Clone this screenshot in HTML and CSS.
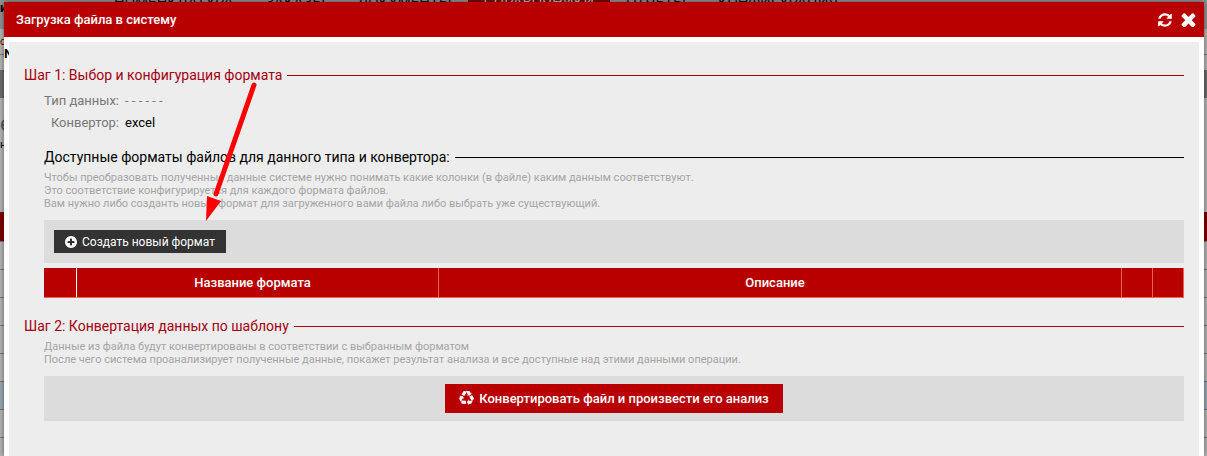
FILE: index.html
```html
<!DOCTYPE html>
<html lang="ru">
<head>
  <meta charset="UTF-8">
  <meta name="viewport" content="width=device-width, initial-scale=1.0">
  <title>Загрузка файла в систему</title>
  <link rel="stylesheet" href="styles.css">
</head>
<body>
  <!-- Page under the dialog -->
  <div class="page">
    <div class="topbar">
      <span class="brand">и</span>
      <nav class="menu">
        <a href="#">НОМЕНКЛАТУРА</a>
        <a href="#">ЗАКАЗЫ</a>
        <a href="#">ДОКУМЕНТЫ</a>
        <a href="#" class="active">СПРАВОЧНИКИ</a>
        <a href="#">ОТЧЕТЫ</a>
        <a href="#">КОНФИГУРАЦИЯ</a>
      </nav>
    </div>
    <div class="crumbs">о</div>
    <div class="spacer"></div>
    <div class="toolbar"></div>
    <div class="caption">
      <span class="big">е</span>
      <span class="small">нт</span>
    </div>
    <div class="list-head"></div>
    <div class="list-row"></div>
    <div class="list-row"></div>
    <div class="list-row"></div>
    <div class="list-row"></div>
    <div class="list-row"></div>
    <div class="list-row selected"></div>
    <div class="list-row"></div>
    <div class="list-row"></div>
  </div>

  <div class="dialog" role="dialog" aria-labelledby="dialogTitle">
    <header class="dialog-head">
      <h1 id="dialogTitle">Загрузка файла в систему</h1>
      <div class="head-buttons">
        <button type="button" aria-label="Обновить">
          <svg viewBox="0 0 1792 1792" width="16" height="16"><path d="M1639 1056q0 5-1 7-64 268-268 434.5t-478 166.5q-146 0-282.5-55t-243.5-157l-129 129q-19 19-45 19t-45-19-19-45v-448q0-26 19-45t45-19h448q26 0 45 19t19 45-19 45l-137 137q71 66 161 102t187 36q134 0 250-65t186-179q11-17 53-117 8-23 30-23h192q13 0 22.5 9.5t9.5 22.5zm25-800v448q0 26-19 45t-45 19h-448q-26 0-45-19t-19-45 19-45l138-138q-148-137-349-137-134 0-250 65t-186 179q-11 17-53 117-8 23-30 23h-199q-13 0-22.5-9.5t-9.5-22.5v-7q65-268 270-434.5t480-166.5q146 0 284 55.5t245 156.5l130-129q19-19 45-19t45 19 19 45z"/></svg>
        </button>
        <button type="button" aria-label="Закрыть">
          <svg viewBox="256 256 1280 1280" width="15" height="15"><path d="M1490 1322q0 40-28 68l-136 136q-28 28-68 28t-68-28l-294-294-294 294q-28 28-68 28t-68-28l-136-136q-28-28-28-68t28-68l294-294-294-294q-28-28-28-68t28-68l136-136q28-28 68-28t68 28l294 294 294-294q28-28 68-28t68 28l136 136q28 28 28 68t-28 68l-294 294 294 294q28 28 28 68z"/></svg>
        </button>
      </div>
    </header>

    <div class="dialog-body">
      <section class="step">
        <h2 class="line-title">Шаг 1: Выбор и конфигурация формата</h2>
        <div class="step-body">
          <dl class="params">
            <dt>Тип данных:</dt>
            <dd class="empty">- - - - - -</dd>
            <dt>Конвертор:</dt>
            <dd>excel</dd>
          </dl>
          <h3 class="line-title">Доступные форматы файлов для данного типа и конвертора:</h3>
          <p class="hint">
            Чтобы преобразовать полученные данные системе нужно понимать какие колонки (в файле) каким данным соответствуют.<br>
            Это соответствие конфигурируется для каждого формата файлов.<br>
            Вам нужно либо созданть новый формат для загруженного вами файла либо выбрать уже существующий.
          </p>
          <div class="panel">
            <button type="button" class="btn btn-dark">
              <svg viewBox="128 128 1536 1536" width="12" height="12"><path d="M1344 960v-128q0-26-19-45t-45-19h-256v-256q0-26-19-45t-45-19h-128q-26 0-45 19t-19 45v256h-256q-26 0-45 19t-19 45v128q0 26 19 45t45 19h256v256q0 26 19 45t45 19h128q26 0 45-19t19-45v-256h256q26 0 45-19t19-45zm320-64q0 209-103 385.5t-279.5 279.5-385.5 103-385.5-103-279.5-279.5-103-385.5 103-385.5 279.5-279.5 385.5-103 385.5 103 279.5 279.5 103 385.5z"/></svg>
              Создать новый формат
            </button>
          </div>
          <table class="formats">
            <thead>
              <tr>
                <th class="col-check"></th>
                <th class="col-name">Название формата</th>
                <th>Описание</th>
                <th class="col-icon"></th>
                <th class="col-icon"></th>
              </tr>
            </thead>
          </table>
        </div>
      </section>

      <section class="step">
        <h2 class="line-title">Шаг 2: Конвертация данных по шаблону</h2>
        <div class="step-body">
          <p class="hint">
            Данные из файла будут конвертированы в соответствии с выбранным форматом<br>
            После чего система проанализирует полученные данные, покажет результат анализа и все доступные над этими данными операции.
          </p>
          <div class="panel panel-center">
            <button type="button" class="btn btn-red">
              <svg viewBox="0 0 1792 1792" width="15" height="15"><path d="M836 1169l-15 368-2 22-420-29q-36-3-67-31.5t-47-65.5q-11-27-14.5-55t4-65 12-55 21.5-64 19-53q78 12 509 28zm-387-586l180 379-147-92q-63 72-111.5 144.5t-72.5 125-39.5 94.5-18.5 63l-4 21-190-357q-17-26-18-56t6-47l8-18q35-63 114-188l-140-86zm1231 517l-188 359q-12 29-36.5 46.5t-43.5 20.5l-18 4q-71 7-219 12l8 164-230-367 211-362 7 173q170 16 283 5t170-33zm-785-924q-47 63-265 435l-317-187-19-12 225-356q20-31 60-45t80-10q24 2 48.5 12t42 21 41.5 33 36 34.5 36 39.5 32 35zm655 307l212 363q18 37 12.5 76t-27.5 74q-13 20-33 37t-38 28-48.5 22-47 16-51.5 14-46 12q-34-72-265-436l313-195zm-143-226l142-83-220 373-419-20 151-86q-34-89-75-166t-75.5-123.5-64.5-80-47-46.5l-17-13 405 1q31-3 58 10.5t39 28.5l11 15q39 61 112 190z"/></svg>
              Конвертировать файл и произвести его анализ
            </button>
          </div>
        </div>
      </section>
    </div>
    <span class="edge-mark">N</span>
  </div>

  <!-- Arrow pointing at the create button -->
  <svg class="arrow" width="70" height="150" viewBox="0 0 70 150">
    <path d="M54 5 L16 114" stroke="#ff0000" stroke-width="5" stroke-linecap="round"/>
    <path d="M7 116 L21 121 L6 141 Z" fill="#ff0000"/>
  </svg>
</body>
</html>
```
FILE: styles.css
```css
* {
  box-sizing: border-box;
}

body {
  margin: 0;
  height: 100vh;
  overflow: hidden;
  position: relative;
  background-color: #b4b4b4;
  font-family: Roboto, "Liberation Sans", sans-serif;
  font-size: 13px;
  color: #000;
}

h1, h2, h3, p, dl, dd {
  margin: 0;
  font-weight: normal;
}

button {
  border: none;
  font-family: inherit;
  cursor: pointer;
}

svg {
  fill: currentColor;
  flex: none;
}

/* page under the dialog */
.page {
  height: 100%;
  overflow: hidden;
}

.topbar {
  display: flex;
  height: 29px;
  background-color: #929292;
}

.brand {
  width: 98px;
  line-height: 16px;
  font-weight: bold;
}

.menu {
  display: flex;
  margin-top: -8px;
}

.menu a {
  height: 20px;
  padding: 0 16px;
  font-size: 15px;
  line-height: 20px;
  color: #111;
  text-decoration: none;
}

.menu a.active {
  background-color: #850000;
  color: #bbb;
}

.crumbs {
  height: 26px;
  line-height: 26px;
  font-size: 11px;
  color: #850000;
  border-bottom: 1px solid #777;
}

.spacer {
  height: 15px;
}

.toolbar {
  height: 28px;
  background-color: #6c6c6c;
}

.caption {
  display: flex;
  flex-direction: column;
  height: 114px;
  padding-top: 12px;
}

.caption .big {
  font-size: 22px;
  line-height: 28px;
  color: #555;
}

.caption .small {
  font-size: 11px;
  line-height: 14px;
}

.list-head {
  height: 29px;
  background-color: #7c0000;
}

.list-row {
  height: 28px;
  border-top: 1px solid #777;
}

.list-row.selected {
  background-color: #98a8b0;
}

/* dialog */
.dialog {
  position: absolute;
  top: 2px;
  right: 3px;
  bottom: 0;
  left: 4px;
  display: flex;
  flex-direction: column;
  background-color: #fff;
  box-shadow: 0 0 5px rgba(0, 0, 0, 0.5);
}

.dialog-head {
  display: flex;
  align-items: center;
  justify-content: space-between;
  height: 35px;
  padding: 0 8px 0 12px;
  background-color: #b90000;
  color: #fff;
}

.dialog-head h1 {
  font-size: 13px;
  font-weight: 500;
}

.head-buttons {
  display: flex;
  align-items: center;
  gap: 8px;
}

.head-buttons button {
  display: flex;
  padding: 0;
  background: none;
  color: #fff;
}

.dialog-body {
  flex: 1;
  margin: 5px 5px 0;
  padding: 24px 15px 0;
  background-color: #ededed;
}

.edge-mark {
  position: absolute;
  top: 44px;
  left: 0;
  width: 5px;
  overflow: hidden;
  font-size: 13px;
  font-weight: bold;
  line-height: 16px;
}

.step {
  margin-bottom: 19px;
}

.step-body {
  padding-left: 20px;
}

.line-title {
  display: flex;
  align-items: center;
  gap: 5px;
  font-size: 14px;
  line-height: 18px;
}

.line-title::after {
  content: "";
  flex: 1;
  height: 1px;
  background-color: #000;
}

h2.line-title {
  color: #a50010;
}

h2.line-title::after {
  background-color: #b00008;
}

.params {
  display: grid;
  grid-template-columns: 75px 1fr;
  column-gap: 6px;
  padding: 6px 0 14px;
  line-height: 22px;
}

.params dt {
  text-align: right;
  color: #777;
}

.params .empty {
  color: #777;
}

.hint {
  margin: 5px 0 10px;
  font-size: 11px;
  line-height: 13px;
  color: #a5a5a5;
}

.panel {
  display: flex;
  padding: 10px;
  background-color: #dcdcdc;
}

.panel-center {
  justify-content: center;
  padding: 8px;
}

.btn {
  display: flex;
  align-items: center;
  gap: 5px;
  color: #fff;
}

.btn-dark {
  height: 23px;
  padding: 0 11px;
  background-color: #333;
  font-size: 12px;
  font-weight: 400;
}

.btn-red {
  height: 29px;
  padding: 0 14px;
  background-color: #b90000;
  font-size: 13px;
  font-weight: 500;
}

.formats {
  width: 100%;
  margin-top: 5px;
  table-layout: fixed;
  border-collapse: separate;
  border-spacing: 0;
  background-color: #b90000;
  color: #fff;
}

.formats th {
  height: 30px;
  padding: 0 10px 0 0;
  border-right: 1px solid #f06050;
  border-bottom: 1px solid #f06050;
  font-size: 13px;
  font-weight: 500;
}

.formats .col-check {
  width: 33px;
  border-right: 1px solid #fff;
}

.formats .col-name {
  width: 362px;
}

.formats .col-icon {
  width: 31px;
}

.arrow {
  position: absolute;
  top: 80px;
  left: 200px;
  pointer-events: none;
}
```
